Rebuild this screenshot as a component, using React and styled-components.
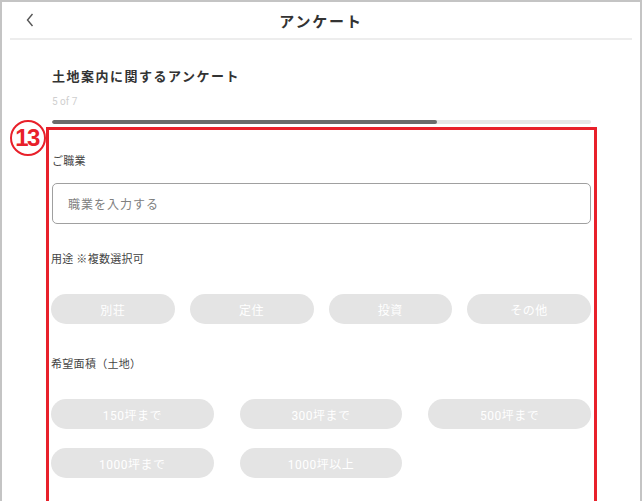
import React from "react";
import styled, { createGlobalStyle } from "styled-components";

const Global = createGlobalStyle`
  html, body { margin: 0; padding: 0; background: #fff; }
  body { font-family: "Noto Sans CJK JP", "Noto Sans", sans-serif; }
  * { box-sizing: border-box; }
`;

const Frame = styled.div`
  width: 642px;
  height: 501px;
  border: 2px solid #c4c4c4;
  border-bottom: none;
  overflow: hidden;
  background: #fff;
`;

const Header = styled.header`
  position: relative;
  height: 38px;
  margin: 0 8px;
  border-bottom: 2px solid #ededed;
  display: flex;
  align-items: center;
  justify-content: center;
`;

const Back = styled.button`
  position: absolute;
  left: 14px;
  top: 10px;
  width: 12px;
  height: 16px;
  padding: 0;
  border: none;
  background: none;
  display: flex;
  align-items: center;
  justify-content: center;
`;

const HeaderTitle = styled.h1`
  margin: 0;
  font-size: 15px;
  font-weight: 700;
  color: #333;
  letter-spacing: 1.8px;
  line-height: 1;
`;

const Main = styled.main`
  padding: 27px 49px 0 50px;
`;

const SurveyTitle = styled.h2`
  margin: 0;
  font-size: 13px;
  font-weight: 700;
  color: #333;
  line-height: 18px;
  letter-spacing: 1.5px;
`;

const Step = styled.div`
  margin-top: 10px;
  font-family: "Roboto", "Liberation Sans", sans-serif;
  font-size: 10px;
  color: #cfcfcf;
  line-height: 14px;
`;

const Track = styled.div`
  margin-top: 11px;
  height: 4px;
  border-radius: 2px;
  background: #e6e6e6;
  overflow: hidden;
`;

const Fill = styled.div`
  height: 100%;
  border-radius: 2px;
  background: #6b6b6b;
`;

const Annotated = styled.section`
  position: relative;
  margin: 3px -6px 0 -6px;
  border: 3px solid #e8202a;
  border-bottom: none;
  padding: 22px 3px 40px 2px;
  height: 400px;
`;

const Badge = styled.span`
  position: absolute;
  left: -39px;
  top: -10px;
  width: 36px;
  height: 36px;
  border-radius: 50%;
  border: 2px solid #e8202a;
  background: #fff;
  color: #e8202a;
  font-family: "Liberation Sans", Arial, sans-serif;
  font-weight: 700;
  font-size: 24px;
  letter-spacing: -1.5px;
  display: flex;
  align-items: center;
  justify-content: center;
  padding-right: 2px;
`;

const Label = styled.div`
  font-size: 11px;
  line-height: 16px;
  color: #444;
  letter-spacing: 0.3px;
  margin-top: ${(p) => p.$mt || 0}px;
  padding-left: ${(p) => p.$pl || 0}px;
`;

const Input = styled.input`
  display: block;
  width: calc(100% - 1px);
  margin: 15px 0 0 1px;
  height: 41px;
  border: 1px solid #a0a0a0;
  border-radius: 5px;
  padding: 0 15px;
  font-family: "Noto Sans CJK JP", sans-serif;
  font-size: 12px;
  color: #333;
  outline: none;
  &::placeholder { color: #808080; letter-spacing: 1px; }
`;

const ChipGrid = styled.div`
  display: grid;
  grid-template-columns: repeat(${(p) => p.$cols}, 1fr);
  column-gap: ${(p) => p.$gap}px;
  row-gap: 19px;
  margin-top: 28px;
`;

const Chip = styled.button`
  height: 30px;
  border: none;
  border-radius: 15px;
  background: #e4e4e4;
  color: #fff;
  font-family: "Roboto", "Noto Sans CJK JP", sans-serif;
  font-size: 12px;
  letter-spacing: 0.5px;
  padding: 0;
`;

const uses = ["別荘", "定住", "投資", "その他"];
const areas = ["150坪まで", "300坪まで", "500坪まで", "1000坪まで", "1000坪以上"];

export default function App() {
  return (
    <>
      <Global />
      <Frame>
        <Header>
          <Back aria-label="back">
            <svg width="10" height="14" viewBox="0 0 10 14">
              <polyline points="7.5,1 2.5,7 7.5,13" fill="none" stroke="#555" strokeWidth="1.4" />
            </svg>
          </Back>
          <HeaderTitle>アンケート</HeaderTitle>
        </Header>
        <Main>
          <SurveyTitle>土地案内に関するアンケート</SurveyTitle>
          <Step>5 of 7</Step>
          <Track>
            <Fill style={{ width: `${(5 / 7) * 100}%` }} />
          </Track>
          <Annotated>
            <Badge>13</Badge>
            <Label $pl={1}>ご職業</Label>
            <Input placeholder="職業を入力する" />
            <Label $mt={26}>用途 ※複数選択可</Label>
            <ChipGrid $cols={4} $gap={15}>
              {uses.map((u) => (
                <Chip key={u}>{u}</Chip>
              ))}
            </ChipGrid>
            <Label $mt={31}>希望面積（土地）</Label>
            <ChipGrid $cols={3} $gap={26}>
              {areas.map((a) => (
                <Chip key={a}>{a}</Chip>
              ))}
            </ChipGrid>
          </Annotated>
        </Main>
      </Frame>
    </>
  );
}
